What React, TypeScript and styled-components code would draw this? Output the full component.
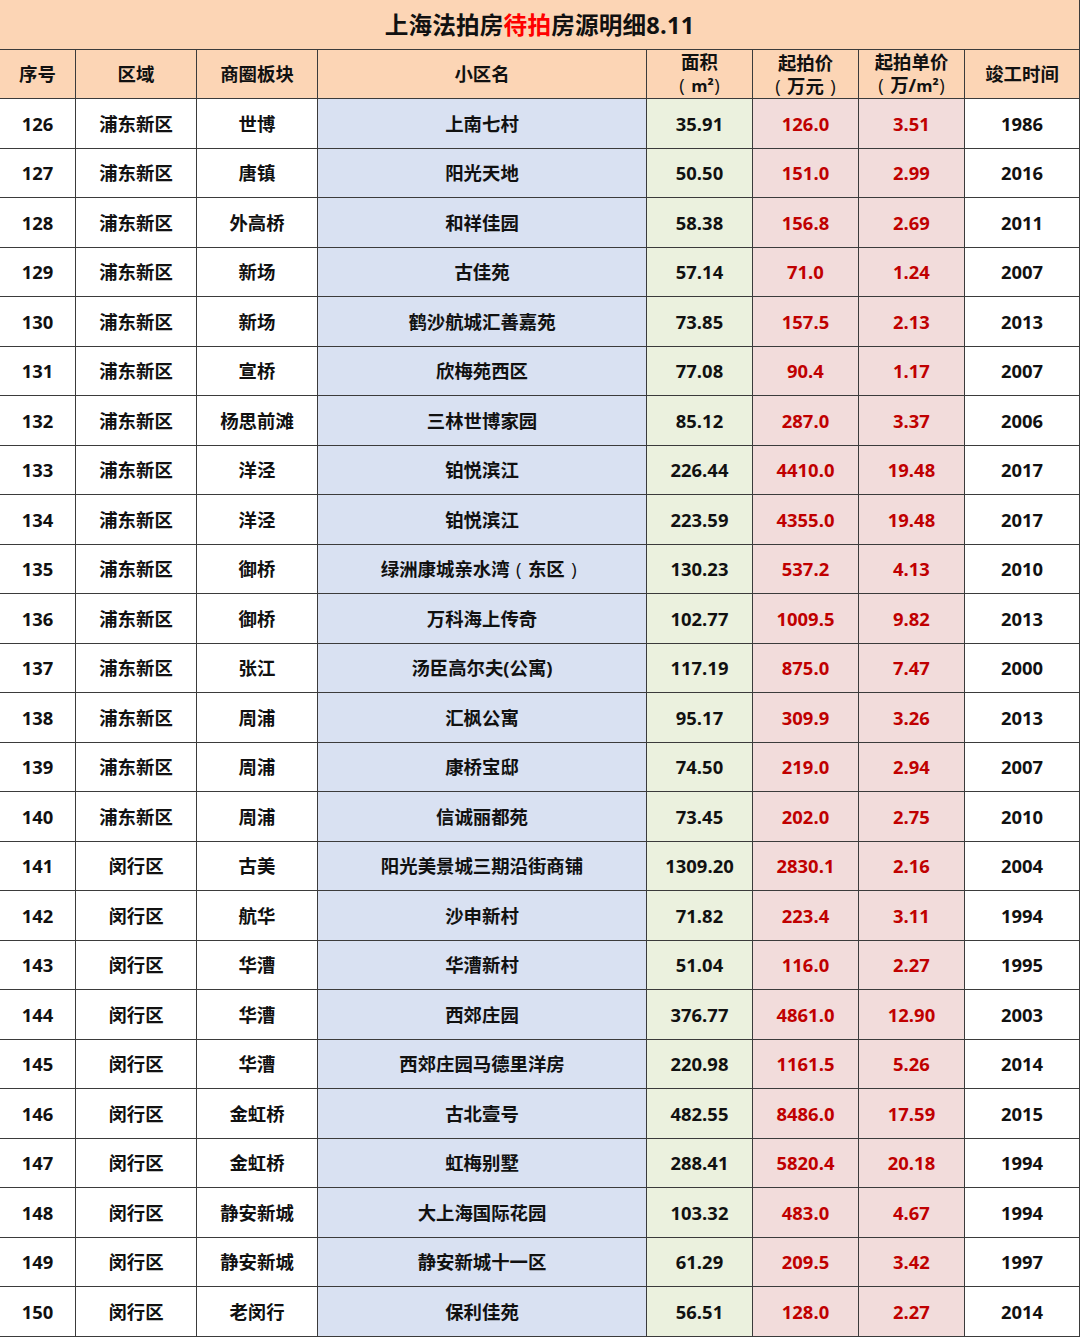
import React from "react";
import styled, { createGlobalStyle } from "styled-components";

const Global = createGlobalStyle`
  html, body { margin: 0; padding: 0; background: #ffffff; }
  body { font-family: "Open Sans", "Noto Sans CJK SC", sans-serif; }
`;

const COLS = "76px 121px 121px 329px 106px 106px 106px 115px";
const LINE = "#3b3b3b";

const Sheet = styled.div`
  width: 1080px;
  display: grid;
  grid-template-columns: ${COLS};
  grid-auto-rows: 49.5px;
  font-family: "Open Sans", "Noto Sans CJK SC", sans-serif;
  font-weight: 700;
  color: #111;
`;

const Title = styled.div`
  grid-column: 1 / -1;
  box-sizing: border-box;
  background: #fcd5b5;
  border-right: 1.5px solid ${LINE};
  border-bottom: 1.5px solid ${LINE};
  display: flex;
  align-items: center;
  justify-content: center;
  font-size: 23.6px;
  letter-spacing: 0.2px;
`;

const Hot = styled.span`
  color: #ff0000;
`;

type Tone = "plain" | "blue" | "green" | "pink" | "head";
const BG: Record<Tone, string> = {
  plain: "#ffffff",
  blue: "#d9e1f2",
  green: "#ebf1de",
  pink: "#f2dcdb",
  head: "#fcd5b5",
};

const Cell = styled.div<{ $tone: Tone; $red?: boolean }>`
  box-sizing: border-box;
  background: ${(p) => BG[p.$tone]};
  color: ${(p) => (p.$red ? "#c00000" : "#111111")};
  border-right: 1.5px solid ${LINE};
  border-bottom: 1.5px solid ${LINE};
  display: flex;
  flex-direction: column;
  align-items: center;
  justify-content: center;
  font-size: 18.4px;
  line-height: 23px;
  text-align: center;
  white-space: nowrap;
`;

const Paren = styled.span`
  display: inline-block;
  width: 1em;
  text-align: center;
  font-weight: 400;
`;

const Sq = styled.span`
  display: inline-block;
  width: 1em;
  text-align: center;
  font-size: 0.9em;
`;

function renderText(s: string) {
  const parts: React.ReactNode[] = [];
  let buf = "";
  const flush = () => {
    if (buf) parts.push(buf);
    buf = "";
  };
  Array.from(s).forEach((ch, i) => {
    if (ch === "（" || ch === "）") {
      flush();
      parts.push(<Paren key={i}>{ch === "（" ? "(" : ")"}</Paren>);
    } else if (ch === "㎡") {
      flush();
      parts.push(<Sq key={i}>m²</Sq>);
    } else {
      buf += ch;
    }
  });
  flush();
  return parts;
}

const rows: string[][] = [
  ["126", "浦东新区", "世博", "上南七村", "35.91", "126.0", "3.51", "1986"],
  ["127", "浦东新区", "唐镇", "阳光天地", "50.50", "151.0", "2.99", "2016"],
  ["128", "浦东新区", "外高桥", "和祥佳园", "58.38", "156.8", "2.69", "2011"],
  ["129", "浦东新区", "新场", "古佳苑", "57.14", "71.0", "1.24", "2007"],
  ["130", "浦东新区", "新场", "鹤沙航城汇善嘉苑", "73.85", "157.5", "2.13", "2013"],
  ["131", "浦东新区", "宣桥", "欣梅苑西区", "77.08", "90.4", "1.17", "2007"],
  ["132", "浦东新区", "杨思前滩", "三林世博家园", "85.12", "287.0", "3.37", "2006"],
  ["133", "浦东新区", "洋泾", "铂悦滨江", "226.44", "4410.0", "19.48", "2017"],
  ["134", "浦东新区", "洋泾", "铂悦滨江", "223.59", "4355.0", "19.48", "2017"],
  ["135", "浦东新区", "御桥", "绿洲康城亲水湾（东区）", "130.23", "537.2", "4.13", "2010"],
  ["136", "浦东新区", "御桥", "万科海上传奇", "102.77", "1009.5", "9.82", "2013"],
  ["137", "浦东新区", "张江", "汤臣高尔夫(公寓)", "117.19", "875.0", "7.47", "2000"],
  ["138", "浦东新区", "周浦", "汇枫公寓", "95.17", "309.9", "3.26", "2013"],
  ["139", "浦东新区", "周浦", "康桥宝邸", "74.50", "219.0", "2.94", "2007"],
  ["140", "浦东新区", "周浦", "信诚丽都苑", "73.45", "202.0", "2.75", "2010"],
  ["141", "闵行区", "古美", "阳光美景城三期沿街商铺", "1309.20", "2830.1", "2.16", "2004"],
  ["142", "闵行区", "航华", "沙申新村", "71.82", "223.4", "3.11", "1994"],
  ["143", "闵行区", "华漕", "华漕新村", "51.04", "116.0", "2.27", "1995"],
  ["144", "闵行区", "华漕", "西郊庄园", "376.77", "4861.0", "12.90", "2003"],
  ["145", "闵行区", "华漕", "西郊庄园马德里洋房", "220.98", "1161.5", "5.26", "2014"],
  ["146", "闵行区", "金虹桥", "古北壹号", "482.55", "8486.0", "17.59", "2015"],
  ["147", "闵行区", "金虹桥", "虹梅别墅", "288.41", "5820.4", "20.18", "1994"],
  ["148", "闵行区", "静安新城", "大上海国际花园", "103.32", "483.0", "4.67", "1994"],
  ["149", "闵行区", "静安新城", "静安新城十一区", "61.29", "209.5", "3.42", "1997"],
  ["150", "闵行区", "老闵行", "保利佳苑", "56.51", "128.0", "2.27", "2014"],
];

const tones: Tone[] = ["plain", "plain", "plain", "blue", "green", "pink", "pink", "plain"];
const reds = [false, false, false, false, false, true, true, false];

const headers: string[][] = [
  ["序号"],
  ["区域"],
  ["商圈板块"],
  ["小区名"],
  ["面积", "（㎡）"],
  ["起拍价", "（万元）"],
  ["起拍单价", "（万/㎡）"],
  ["竣工时间"],
];

export default function App() {
  return (
    <>
      <Global />
      <Sheet>
        <Title>
          上海法拍房<Hot>待拍</Hot>房源明细8.11
        </Title>
        {headers.map((h, i) => (
          <Cell key={"h" + i} $tone="head">
            {h.map((line, j) => (
              <span key={j}>{renderText(line)}</span>
            ))}
          </Cell>
        ))}
        {rows.map((r, ri) =>
          r.map((v, ci) => (
            <Cell key={ri + "-" + ci} $tone={tones[ci]} $red={reds[ci]}>
              <span>{renderText(v)}</span>
            </Cell>
          ))
        )}
      </Sheet>
    </>
  );
}
